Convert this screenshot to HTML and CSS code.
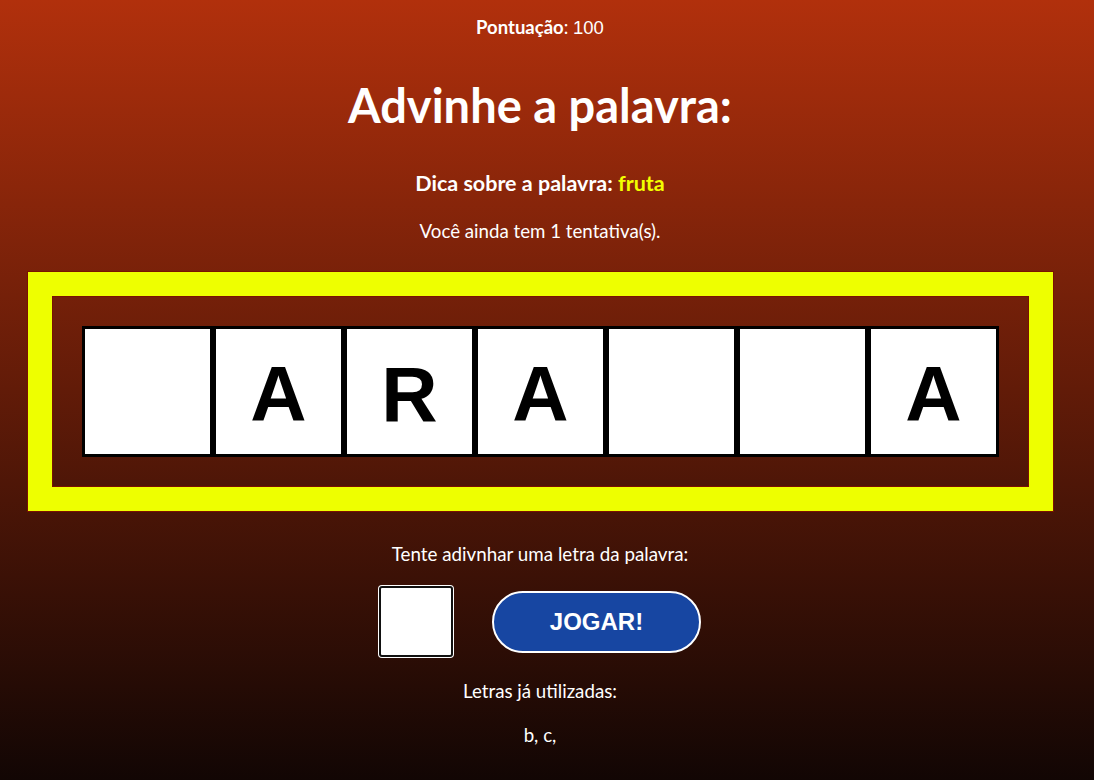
FILE: index.html
```html
<!DOCTYPE html>
<html lang="pt-BR">
<head>
<meta charset="utf-8">
<title>Advinhe a palavra</title>
<link rel="stylesheet" href="styles.css">
</head>
<body>
<main class="page">
  <p class="score"><strong>Pontuação</strong>: <span class="score-num">100</span></p>
  <h1 class="title">Advinhe a palavra:</h1>
  <p class="hint">Dica sobre a palavra: <span class="hint-word">fruta</span></p>
  <p class="tries">Você ainda tem 1 tentativa(s).</p>
  <section class="frame">
    <div class="frame-ring">
      <div class="frame-inner">
        <div class="letters">
          <div class="cell"></div>
          <div class="cell">A</div>
          <div class="cell">R</div>
          <div class="cell">A</div>
          <div class="cell"></div>
          <div class="cell"></div>
          <div class="cell">A</div>
        </div>
      </div>
    </div>
  </section>
  <p class="prompt">Tente adivnhar uma letra da palavra:</p>
  <div class="guess">
    <input class="guess-input" type="text" maxlength="1">
    <button class="play" type="button">JOGAR!</button>
  </div>
  <p class="used-label">Letras já utilizadas:</p>
  <p class="used">b, c,</p>
</main>
</body>
</html>
```

FILE: styles.css
```css
html, body {
  height: 100%;
}
body {
  margin: 0;
  background: linear-gradient(to bottom, #b1300c 0%, #120604 100%);
  font-family: Lato, "Open Sans", sans-serif;
  color: #ffffff;
  overflow: hidden;
}
.page {
  margin: 0 22px 0 8px;
  text-align: center;
}
.score {
  margin: 0;
  padding-top: 16px;
  font-size: 18.5px;
  line-height: 22px;
}
.score strong {
  font-weight: 700;
}
.score-num {
  font-family: "Liberation Sans", Arial, sans-serif;
  font-weight: 400;
}
.title {
  margin: 38px 0 0;
  font-size: 47px;
  line-height: 56px;
  font-weight: 700;
}
.hint {
  margin: 38px 0 0;
  font-size: 21.5px;
  line-height: 24px;
  font-weight: 700;
}
.hint-word {
  color: #f2ff00;
}
.tries {
  margin: 24px 0 0;
  font-size: 18.7px;
  line-height: 24px;
}
.frame {
  margin: 28px 18px 0 19px;
  border: 1px solid #7a1200;
}
.frame-ring {
  border: 24px solid #eeff00;
}
.frame-inner {
  padding: 29px;
  border: 1px solid #7a1200;
}
.letters {
  display: flex;
}
.cell {
  width: 125px;
  height: 125px;
  border: 3px solid #000;
  background: #fff;
  color: #000;
  font-family: "Liberation Sans", Arial, sans-serif;
  font-weight: 700;
  font-size: 78px;
  line-height: 131px;
}
.prompt {
  margin: 30px 0 0;
  font-size: 18.8px;
  line-height: 24px;
}
.guess {
  display: flex;
  justify-content: center;
  align-items: center;
  gap: 39px;
  margin-top: 20px;
}
.guess-input {
  box-sizing: border-box;
  width: 74px;
  height: 71px;
  margin: 0;
  border: 2px solid #111;
  border-radius: 3px;
  box-shadow: 0 0 0 1px #ffffff;
  background: #fff;
}
.play {
  box-sizing: border-box;
  width: 209px;
  height: 62px;
  margin: 0;
  border: 2px solid #ffffff;
  border-radius: 31px;
  background: #1746a2;
  color: #ffffff;
  font-family: "Liberation Sans", Arial, sans-serif;
  font-weight: 700;
  font-size: 24px;
}
.used-label {
  margin: 22px 0 0;
  font-size: 18.7px;
  line-height: 24px;
}
.used {
  margin: 20px 0 0;
  font-size: 18.7px;
  line-height: 24px;
}
```
